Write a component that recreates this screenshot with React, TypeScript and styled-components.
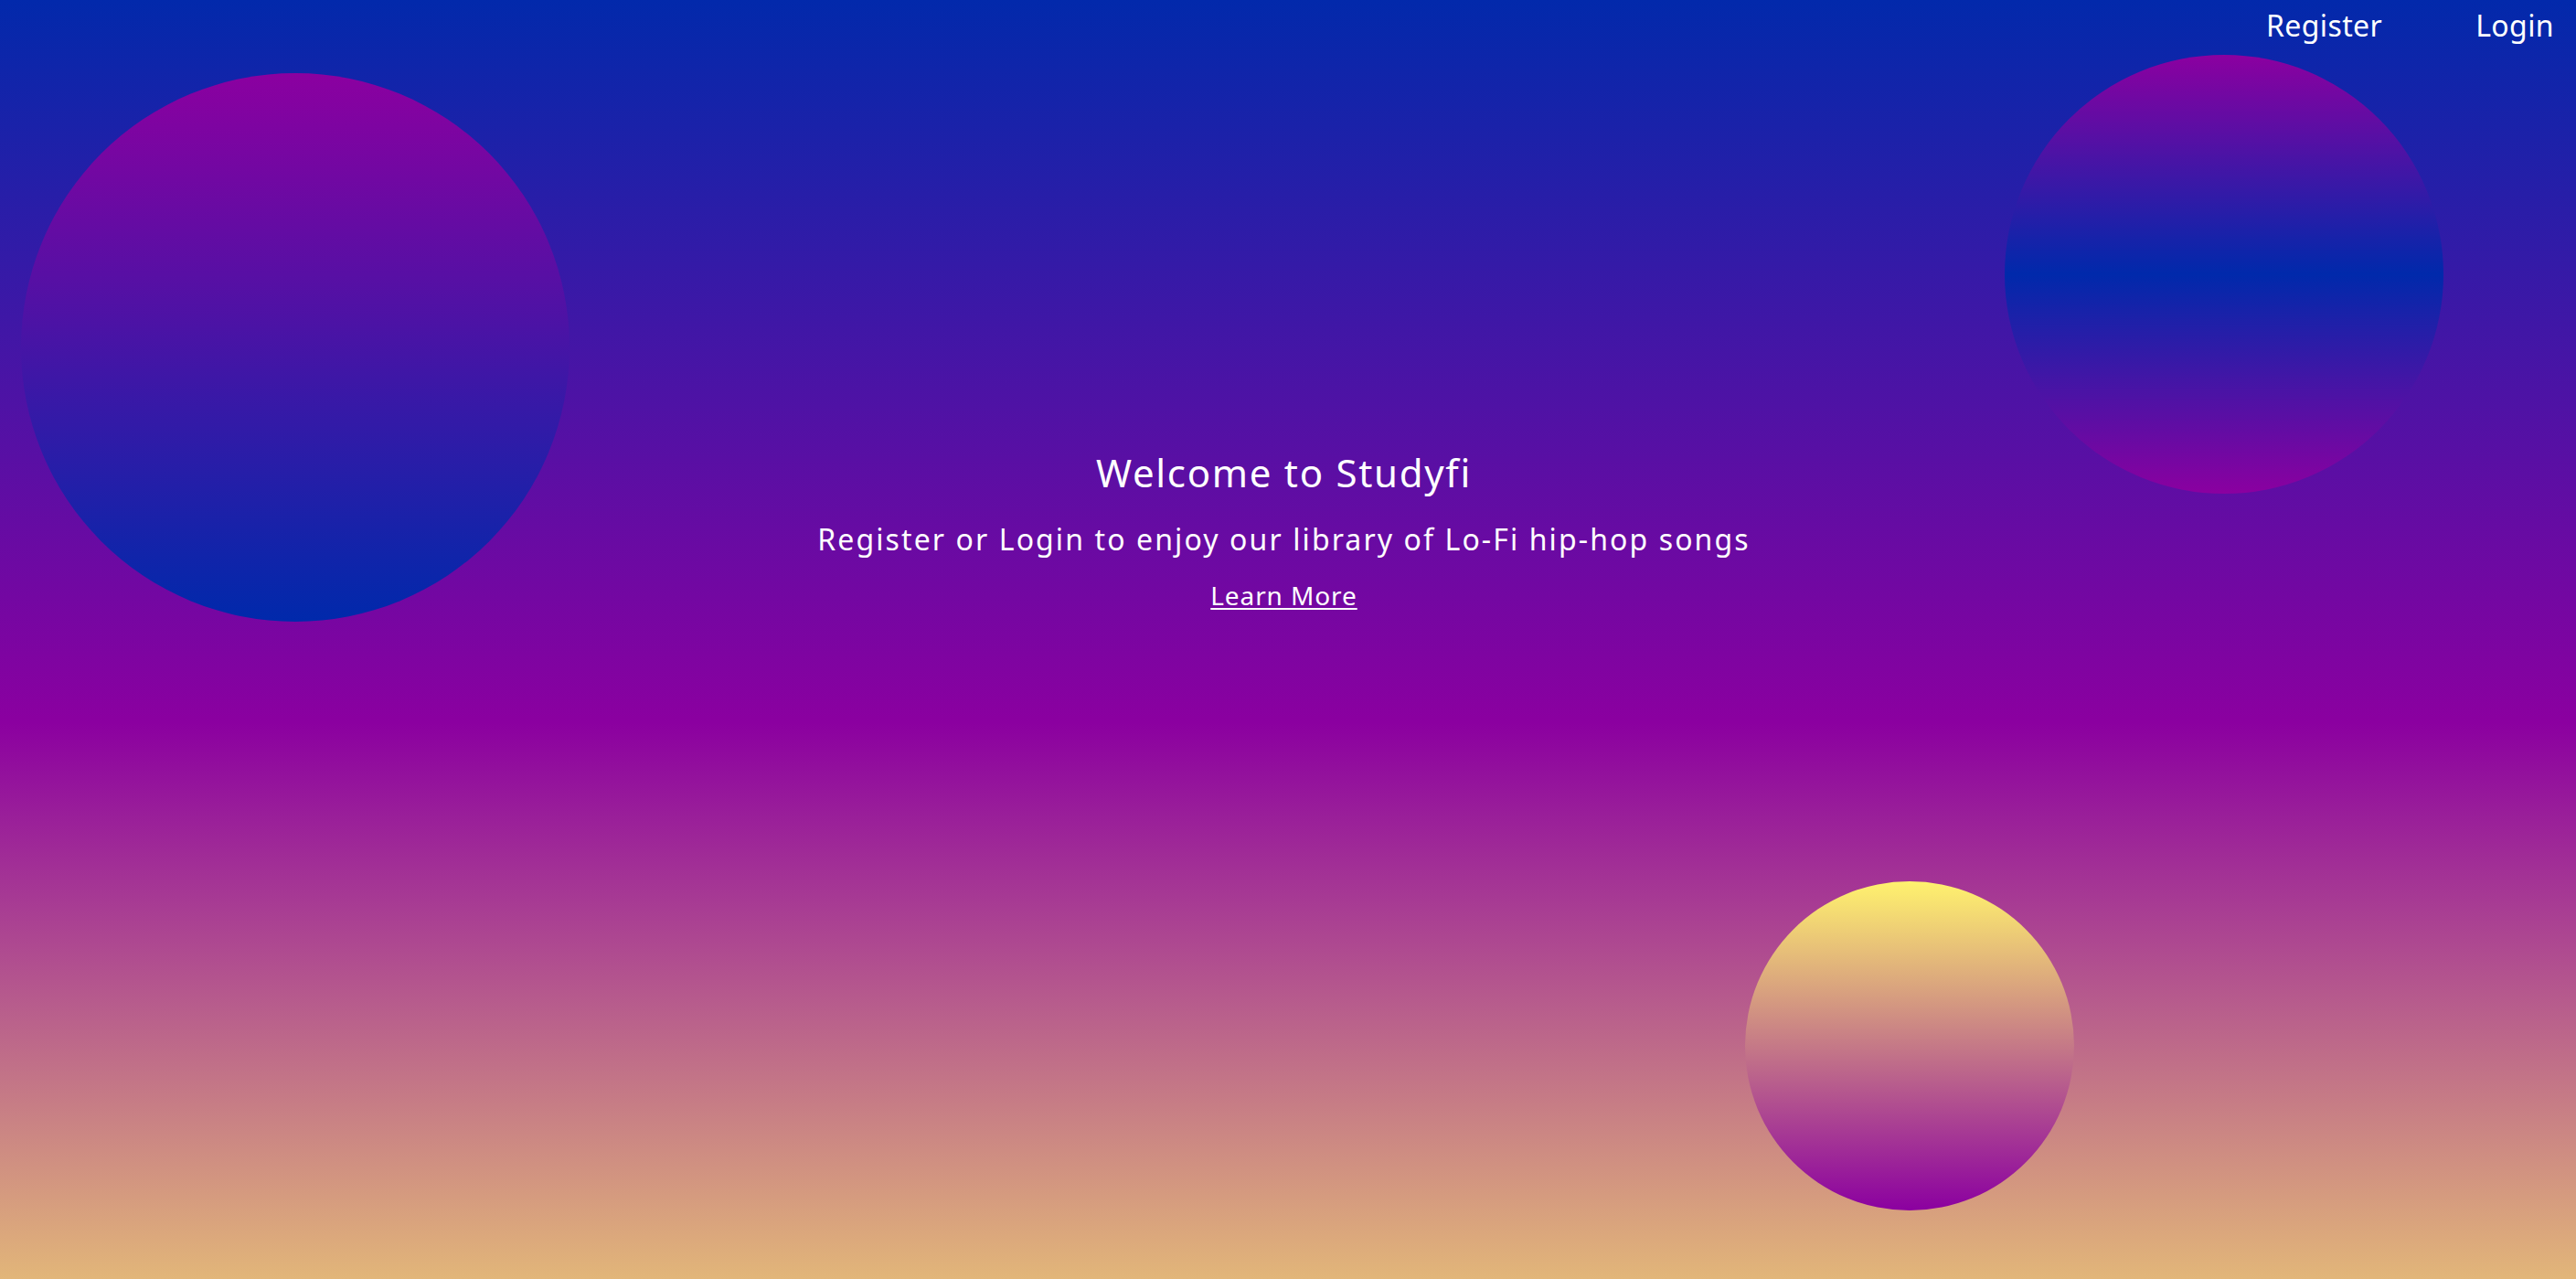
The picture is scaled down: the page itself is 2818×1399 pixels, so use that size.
import React from "react";
import styled, { createGlobalStyle } from "styled-components";

const GlobalStyle = createGlobalStyle`
  * { box-sizing: border-box; }
  html, body { margin: 0; padding: 0; }
  body {
    font-family: "Noto Sans", "Open Sans", sans-serif;
    color: #ffffff;
  }
`;

const Page = styled.div`
  position: relative;
  min-height: 100vh;
  overflow: hidden;
  display: flex;
  flex-direction: column;
  background: linear-gradient(180deg, #0229ab 0%, #8b00a0 56.5%, #e2b679 100%);
`;

const Orb = styled.div<{ $size: number; $top: number; $left: number; $bg: string }>`
  position: absolute;
  top: ${(p) => p.$top}px;
  left: ${(p) => p.$left}px;
  width: ${(p) => p.$size}px;
  height: ${(p) => p.$size}px;
  border-radius: 50%;
  background: ${(p) => p.$bg};
`;

const Header = styled.header`
  position: relative;
  display: flex;
  justify-content: flex-end;
  align-items: center;
  gap: 102px;
  padding: 8px 24px 0 0;
`;

const NavLink = styled.a`
  font-size: 32px;
  line-height: 40px;
  letter-spacing: 0.4px;
  color: #ffffff;
  text-decoration: none;
  cursor: pointer;
`;

const Hero = styled.main`
  position: relative;
  display: flex;
  flex-direction: column;
  align-items: center;
  margin-top: 444px;
  padding-right: 9px;
  text-align: center;
`;

const Title = styled.h1`
  margin: 0;
  font-size: 42px;
  line-height: 50px;
  font-weight: 400;
  letter-spacing: 1.7px;
`;

const Subtitle = styled.p`
  margin: 28px 0 0;
  font-size: 32px;
  line-height: 40px;
  letter-spacing: 2.1px;
`;

const LearnMore = styled.a`
  margin-top: 23px;
  font-size: 28px;
  line-height: 36px;
  letter-spacing: 0.9px;
  color: #ffffff;
  text-decoration: underline;
  text-underline-offset: 3px;
  cursor: pointer;
`;

export default function App() {
  return (
    <Page>
      <GlobalStyle />
      <Orb $size={600} $top={80} $left={23} $bg="linear-gradient(180deg, #8b00a0 0%, #0029ab 100%)" />
      <Orb $size={480} $top={60} $left={2193} $bg="linear-gradient(180deg, #8b00a0 0%, #0029ab 50%, #8b00a0 100%)" />
      <Orb $size={360} $top={964} $left={1909} $bg="linear-gradient(180deg, #fff26e 0%, #8b00a0 100%)" />
      <Header>
        <NavLink>Register</NavLink>
        <NavLink>Login</NavLink>
      </Header>
      <Hero>
        <Title>Welcome to Studyfi</Title>
        <Subtitle>Register or Login to enjoy our library of Lo-Fi hip-hop songs</Subtitle>
        <LearnMore>Learn More</LearnMore>
      </Hero>
    </Page>
  );
}
